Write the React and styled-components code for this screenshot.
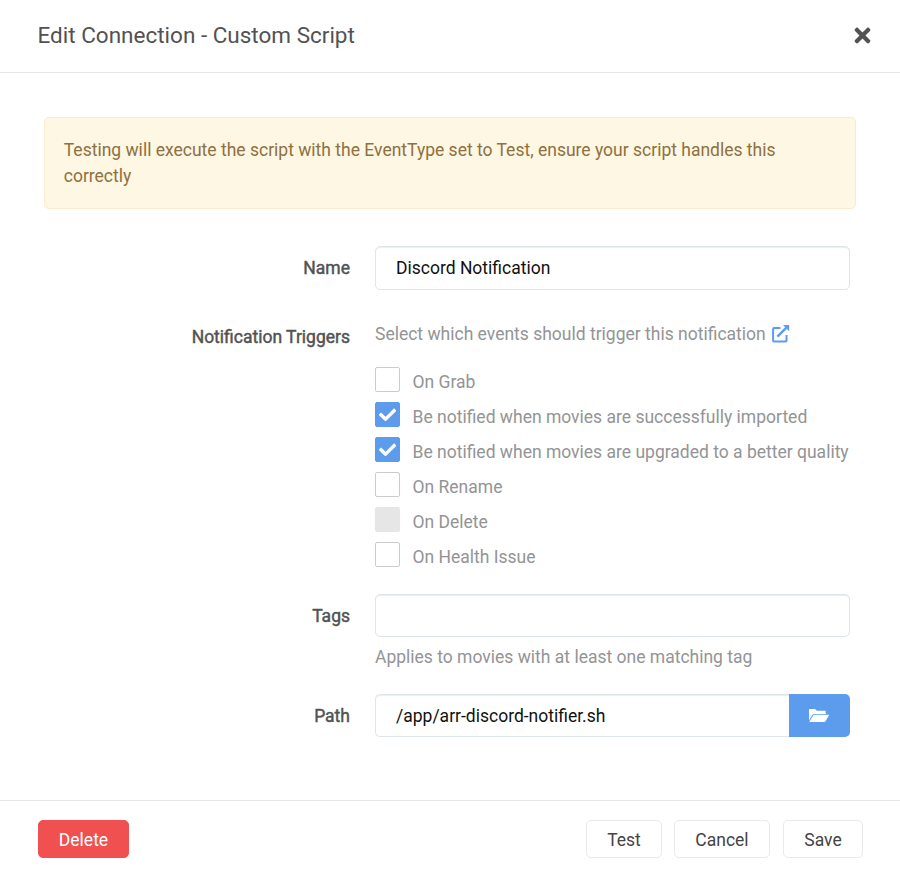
import React from 'react';
import styled, { createGlobalStyle, css } from 'styled-components';
import { FaTimes } from 'react-icons/fa';

const GlobalStyle = createGlobalStyle`
  *, *::before, *::after { box-sizing: border-box; }
  body { margin: 0; background: #fff; font-family: Roboto, "Open Sans", sans-serif; font-size: 17.5px; line-height: 26px; color: #515253; }
  button, input { font: inherit; }
`;
const Modal = styled.div`display: flex; flex-direction: column; width: 900px; height: 877px; background: #fff;`;
const Header = styled.header`
  display: flex; align-items: center; justify-content: space-between; flex: none;
  height: 73px; padding: 0 26px 2px 37.5px; border-bottom: 1px solid #e5e5e5;
`;
const Title = styled.h1`margin: 0; font-size: 22.5px; font-weight: 400; line-height: 30px;`;
const CloseButton = styled.button`
  display: flex; padding: 0; border: 0; background: none; color: #515253; font-size: 23px;
`;
const Body = styled.main`flex: 1; padding: 44px 44px 0;`;
const Alert = styled.div`
  height: 92px; padding: 19px 19px 19px 18.75px; border: 1px solid #faebcc; border-radius: 5px;
  background: #fdf7e3; color: #8f7040;
`;
const Form = styled.form`margin-top: 37px; padding-right: 6px;`;
const Group = styled.div`
  display: grid; grid-template-columns: 306px 475px; column-gap: 25px; height: ${p => p.$height}px;
`;
const Label = styled.label`
  padding-top: ${p => p.$top || 9}px; text-align: right; font-weight: 400;
  -webkit-text-stroke: 0.45px currentColor;
`;
const Field = styled.div`display: flex; flex-direction: column;`;
const InputRow = styled.div`display: flex;`;
const Input = styled.input`
  flex: 1; min-width: 0; height: ${p => p.$height || 43}px; padding: 0 20px; border: 1px solid #dde6e9;
  border-radius: ${p => p.$joined ? '5px 0 0 5px' : '5px'}; outline: 0; background: #fff; color: #111;
  box-shadow: inset 0 1px 1px rgba(0,0,0,.075); ${p => p.$joined && css`border-right: 0;`}
`;
const BrowseButton = styled.button`
  display: flex; align-items: center; justify-content: center; width: 61px; height: 43px;
  padding: 0 1px 0 0; border: 0; border-radius: 0 5px 5px 0; background: #5d9cec; color: #fff;
`;
const Help = styled.div`
  display: flex; align-items: center; margin-top: ${p => p.$top}px; color: #939495; white-space: nowrap;
  svg { margin-left: 6px; color: #5d9cec; }
`;
const Options = styled.div`margin-top: 20px;`;
const Option = styled.label`display: flex; height: 35px; color: #939495; white-space: nowrap;`;
const Box = styled.span`
  display: flex; align-items: center; justify-content: center; width: 25px; height: 25px; margin-right: 12.5px;
  border: 1px solid ${p => p.$checked ? '#5d9cec' : p.$disabled ? '#e6e6e6' : '#ccc'}; border-radius: 2px;
  background: ${p => p.$checked ? '#5d9cec' : p.$disabled ? '#e6e6e6' : '#fff'}; color: #fff;
`;
const OptionText = styled.span`padding-top: 2px;`;
const Footer = styled.footer`
  display: flex; align-items: flex-start; height: 77px; padding: 19px 37px 0 38px; border-top: 1px solid #e5e5e5;
`;
const Actions = styled.div`display: flex; margin-left: auto;`;
const Button = styled.button`
  width: ${p => p.$width}px; height: 38px; margin-right: ${p => p.$gap || 0}px; padding: 1px 0 0; border-radius: 5px;
  border: 1px solid ${p => p.$danger ? '#f05050' : '#eaeaea'};
  background: ${p => p.$danger ? '#f05050' : '#fff'}; color: ${p => p.$danger ? '#fff' : '#444'};
`;
const CheckIcon = () => (
  <svg width="17" height="17" viewBox="0 0 17 17" fill="none">
    <path d="M2 8.8 6.6 13.2 15.1 4.7" stroke="currentColor" strokeWidth="3.3" strokeLinecap="square" strokeLinejoin="round" />
  </svg>
);
const ExternalIcon = () => (
  <svg width="18" height="18" viewBox="0 0 18 18">
    <path d="M8.5 3H2q-.9 0-.9.9v11.6q0 .9.9.9h11.6q.9 0 .9-.9V10" fill="none" stroke="currentColor" strokeWidth="2" />
    <path d="M5.4 11.7 14.2 2.9" stroke="currentColor" strokeWidth="2.4" />
    <path d="M11 0H17.2V6.2Z" fill="currentColor" />
  </svg>
);
const FolderIcon = () => (
  <svg width="20" height="13" viewBox="0 0 20 13" fill="currentColor">
    <path d="M0 .6Q0 0 .6 0H5.8Q6.5 0 7 .7L7.8 1.8H16Q16.7 1.8 16.7 2.5V4.9H5.2Q4 4.9 3.3 6L0 11.4Z" />
    <path d="M.5 12.5 4.2 6.6Q4.7 5.8 5.6 5.8H19.6Q20.2 5.8 19.8 6.5L16.5 12.2Q16 13 15.2 13H.8Q.2 13 .5 12.5Z" />
  </svg>
);
const triggers = [
  { text: 'On Grab' },
  { text: 'Be notified when movies are successfully imported', checked: true },
  { text: 'Be notified when movies are upgraded to a better quality', checked: true },
  { text: 'On Rename' },
  { text: 'On Delete', disabled: true },
  { text: 'On Health Issue' },
];

export default function App() {
  return (
    <>
      <GlobalStyle />
      <Modal>
        <Header>
          <Title>Edit Connection - Custom Script</Title>
          <CloseButton aria-label="Close"><FaTimes /></CloseButton>
        </Header>
        <Body>
          <Alert>Testing will execute the script with the EventType set to Test, ensure your script handles this correctly</Alert>
          <Form>
            <Group $height={75}>
              <Label>Name</Label>
              <Field><InputRow><Input $height={44} defaultValue="Discord Notification" /></InputRow></Field>
            </Group>
            <Group $height={273}>
              <Label $top={3}>Notification Triggers</Label>
              <Field>
                <Help $top={0}>Select which events should trigger this notification<ExternalIcon /></Help>
                <Options>
                  {triggers.map(t => (
                    <Option key={t.text}>
                      <Box $checked={t.checked} $disabled={t.disabled}>{t.checked && <CheckIcon />}</Box>
                      <OptionText>{t.text}</OptionText>
                    </Option>
                  ))}
                </Options>
              </Field>
            </Group>
            <Group $height={100}>
              <Label>Tags</Label>
              <Field><InputRow><Input /></InputRow><Help $top={7}>Applies to movies with at least one matching tag</Help></Field>
            </Group>
            <Group $height={43}>
              <Label>Path</Label>
              <Field>
                <InputRow>
                  <Input $joined defaultValue="/app/arr-discord-notifier.sh" />
                  <BrowseButton type="button" aria-label="Browse"><FolderIcon /></BrowseButton>
                </InputRow>
              </Field>
            </Group>
          </Form>
        </Body>
        <Footer>
          <Button $danger $width={91}>Delete</Button>
          <Actions>
            <Button $width={76} $gap={12}>Test</Button>
            <Button $width={96} $gap={13}>Cancel</Button>
            <Button $width={80}>Save</Button>
          </Actions>
        </Footer>
      </Modal>
    </>
  );
}
